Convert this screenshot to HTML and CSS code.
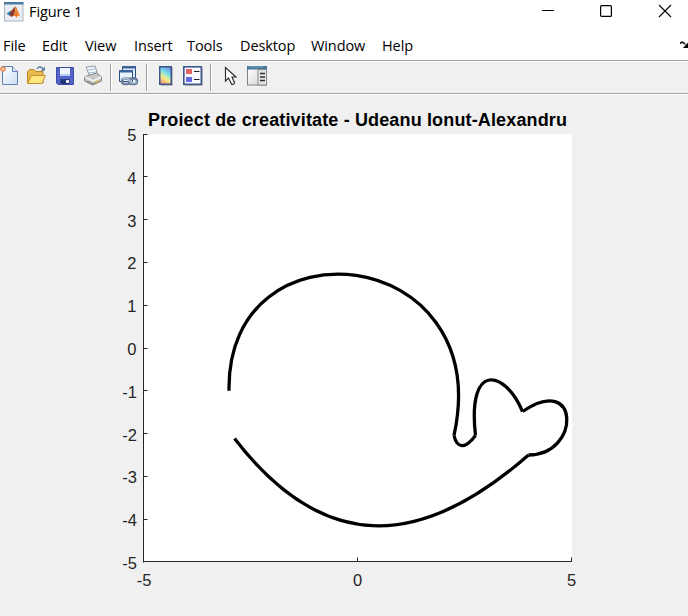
FILE: index.html
```html
<!DOCTYPE html>
<html lang="en">
<head>
<meta charset="utf-8">
<title>Figure 1</title>
<link rel="stylesheet" href="styles.css">
</head>
<body>
<header class="titlebar">
  <svg class="app-icon" width="20" height="20" viewBox="0 0 20 20"><rect x=".5" y=".5" width="18.5" height="18.5" fill="#e9edf1" stroke="#a8b4c0"/><path d="M0 0h19.5v2.5H0z" fill="#487ca5"/><path d="M2.500 11.500 6.500 9l2.200 2.600L6 14z" fill="#247bb0"/><path d="M6.500 9C9 8.500 10 4.500 11.500 4.500l-1 8L7.500 15 6 13.500z" fill="#943a29"/><path d="M11.500 4.500C13 5 14 11 17 15c-2-2-3-2-4.500 1-.7-2-2-2.500-4-1.500 2-2 3-5 3-10z" fill="#ed802c"/></svg>
  <span class="title">Figure 1</span>
  <div class="controls">
    <svg width="16" height="16" viewBox="0 0 16 16"><path d="M2 8.500h12" stroke="#000"/></svg>
    <svg width="16" height="16" viewBox="0 0 16 16"><rect x="2.600" y="3.600" width="10.800" height="10.800" rx="1" fill="none" stroke="#000" stroke-width="1.200"/></svg>
    <svg width="16" height="16" viewBox="0 0 16 16"><path d="m2 3 12 12M14 3 2 15" stroke="#000" stroke-width="1.100"/></svg>
  </div>
</header>
<nav class="menubar">
  <span>File</span><span>Edit</span><span>View</span><span>Insert</span><span>Tools</span><span>Desktop</span><span>Window</span><span>Help</span>
  <svg class="dock" width="8" height="8" viewBox="0 0 8 8"><path d="M0 2.500C2 .5 4 1 5 3.500" fill="none" stroke="#222" stroke-width="1.800"/><path d="M8 1.500v5.500H3z"/></svg>
</nav>
<div class="toolbar">
  <svg width="20" height="22" viewBox="0 0 20 22"><defs><linearGradient id="paper" x2="1" y2="1"><stop stop-color="#fff"/><stop offset="1" stop-color="#c9def7"/></linearGradient></defs><path d="M3.500 1.500h10l5 5v13h-15z" fill="url(#paper)" stroke="#607fb5"/><path d="M13.500 1.500v5h5" fill="#dce9fa" stroke="#607fb5"/><path d="M1 4h6M4 1v6M2 2l4 4M6 2 2 6" stroke="#e8794b" stroke-width="1.300"/><circle cx="4" cy="4" r="1.500" fill="#ffd5ab"/></svg>
  <svg width="20" height="22" viewBox="0 0 20 22"><path d="M1.500 18V6.500l2-2H8l2 2h7V18z" fill="#e9b84e" stroke="#b98624"/><path d="m1.500 18.500 4-8h14l-3.500 8z" fill="#ffe680" stroke="#c4902b"/><path d="M11 4c2-3 4-3 6 0" fill="none" stroke="#53749a" stroke-width="1.300"/><path d="M18.800 1.500v4.300h-4z" fill="#53749a"/></svg>
  <svg width="20" height="22" viewBox="0 0 20 22"><path d="M1.500 2.500h17v17H3l-1.500-1.500z" fill="#5463c9" stroke="#3e4aa5"/><path d="M5 3h10v8H5z" fill="#eff5ff"/><path d="M5 9h10v2H5z" fill="#b6cff5"/><path d="M5.500 14h9v5h-9z" fill="#233477"/><path d="M11 15h3v3h-3z" fill="#e4e9f5"/></svg>
  <svg width="20" height="22" viewBox="0 0 20 22"><path d="m3 2 9-1 3 9-8 2z" fill="#f4f8ff" stroke="#8f9aa8"/><path d="m5 5 7-1M6 8l7-1" stroke="#a4bad4"/><path d="m1.500 12 5-2 7-2 5 4v4l-9 4-8-4z" fill="#c9c9c9" stroke="#858585"/><path d="m2 12 8 4 8-4" fill="none" stroke="#f5f5f5" stroke-width="1.500"/><path d="m4 16 6 3 7-3" fill="none" stroke="#777"/><path d="M12 17.500 16 16" stroke="#dfb55c" stroke-width="1.500"/></svg>
  <i class="sep"></i>
  <svg width="21" height="22" viewBox="0 0 21 22"><path d="M4.500 1.500h13v11h-13z" fill="#dce8f5" stroke="#294c82"/><path d="M4 1h14v2.500H4z" fill="#3d639c"/><path d="M1.500 5.500h13v11h-13z" fill="#e9f1fb" stroke="#294c82"/><path d="M1 5h14v2.500H1z" fill="#3d639c"/><g fill="none"><rect x="4" y="13.500" width="8" height="5.500" rx="2.750" stroke="#6b809c" stroke-width="2.500"/><rect x="11" y="13.500" width="8" height="5.500" rx="2.750" stroke="#6b809c" stroke-width="2.500"/><path d="M4.500 14.500c2-2 5-2 7 1s5 3 7 1" stroke="#b7c9df" stroke-width="1.500"/></g></svg>
  <i class="sep"></i>
  <svg width="14" height="22" viewBox="0 0 14 22"><defs><linearGradient id="spectrum" x1=".7" x2=".3" y2="1"><stop stop-color="#6f8fe2"/><stop offset=".35" stop-color="#79def0"/><stop offset=".65" stop-color="#f2ef87"/><stop offset="1" stop-color="#f49a7c"/></linearGradient></defs><path d="M2 2h12v19H2z" fill="#bbb"/><rect x=".75" y="1.750" width="11.500" height="17.500" fill="url(#spectrum)" stroke="#3d568d" stroke-width="1.500"/></svg>
  <svg width="20" height="22" viewBox="0 0 20 22"><path d="M2 3h18v18H2z" fill="#bbb"/><rect x=".8" y="1.800" width="17.500" height="17.500" fill="#f9fbff" stroke="#3d568d" stroke-width="1.600"/><path d="M3 4h6v5H3z" fill="#e46462"/><path d="M3 12h6v5H3z" fill="#6467df"/><path d="M11 6.500h5.500M11 14.500h5.500" stroke="#222" stroke-width="1.200"/></svg>
  <i class="sep"></i>
  <svg width="13" height="22" viewBox="0 0 13 22"><path d="M1.500 2.500V16l3-3 3 6c1 1 3 0 3-1.500L8 12h4z" fill="#fff" stroke="#303030" stroke-width="1.200"/></svg>
  <svg width="20" height="22" viewBox="0 0 20 22"><defs><linearGradient id="pane" x2="1" y2="1"><stop stop-color="#fff"/><stop offset="1" stop-color="#d2d2d2"/></linearGradient></defs><rect x=".5" y="1.500" width="19" height="18.500" fill="url(#pane)" stroke="#808080"/><path d="M0 1h20v3.500H0z" fill="#447999"/><path d="M2 2h14" stroke="#74a2bd"/><path d="M11 4.500h8.500V20H11z" fill="#e3e3e3" stroke="#888"/><path d="M13 8.500h5M13 12h5M13 15.500h5" stroke="#303030" stroke-width="1.400"/></svg>
</div>
<main class="figure">
  <svg width="688" height="521" viewBox="0 95 688 521">
    <path d="M144 134h428v428H144z" fill="#fff"/>
    <path d="M143.500 134v428.500M143 561.500h429M143.500 134.500h4M143.500 176.500h4M143.500 219.500h4M143.500 262.500h4M143.500 305.500h4M143.500 348.500h4M143.500 390.500h4M143.500 433.500h4M143.500 476.500h4M143.500 519.500h4M357.500 561.500v-4M571.500 561.500v-4" fill="none" stroke="#262626"/>
    <text class="plot-title" x="148" y="126" textLength="419">Proiect de creativitate - Udeanu Ionut-Alexandru</text>
    <g class="ticks y">
      <text x="136.500" y="141">5</text><text x="136.500" y="184">4</text><text x="136.500" y="227">3</text><text x="136.500" y="269">2</text><text x="136.500" y="312">1</text><text x="136.500" y="355">0</text><text x="137" y="398">-1</text><text x="137" y="441">-2</text><text x="137" y="483">-3</text><text x="137" y="526">-4</text><text x="137" y="569">-5</text>
    </g>
    <g class="ticks x"><text x="144" y="586">-5</text><text x="357.500" y="586">0</text><text x="571.500" y="586">5</text></g>
    <g class="whale">
      <path d="M229 390.700C226 216 496 243 454 435.500"/>
      <path d="M454 435.500C457 448.500 465 449.500 475.500 435.500"/>
      <path d="M475.500 435.500C467 361 505 370 522.500 411.500"/>
      <path d="M522.500 411.500C580 372 581 455 528.500 455"/>
      <path d="M234.500 438.500C322 552 418 552 528.500 455"/>
    </g>
  </svg>
</main>
</body>
</html>
```
FILE: styles.css
```css
* { box-sizing: border-box; }
body {
  margin: 0;
  width: 688px;
  height: 616px;
  overflow: hidden;
  background: #f0f0f0;
  color: #000;
  font-family: "Open Sans", "Noto Sans", sans-serif;
  font-size: 14.5px;
}
svg { display: block; flex: none; }
.titlebar {
  display: flex;
  height: 31px;
  padding: 2px 15px 0 4px;
  background: #fff;
}
.title {
  margin: 0 0 0 5px;
  line-height: 20px;
  letter-spacing: -0.1px;
}
.controls { display: flex; gap: 42px; margin-left: auto; }
.controls svg:last-child { margin-left: 1px; }
.menubar {
  display: grid;
  grid-template-columns: 39px 43px 49px 53px 53px 71px 71px 1fr auto;
  height: 29px;
  padding-left: 3px;
  background: #fff;
  line-height: 30px;
  letter-spacing: -0.1px;
}
.dock { margin-top: 10px; }
.toolbar {
  display: flex;
  align-items: flex-start;
  height: 34px;
  padding-top: 4px;
  border-top: 1px solid #a0a0a0;
  border-bottom: 1px solid #a0a0a0;
  box-shadow: inset 0 1px #fff, 0 1px #fff;
}
.toolbar svg:nth-child(1) { margin-left: -1px; }
.toolbar svg:nth-child(2) { margin-left: 7px; }
.toolbar svg:nth-child(3) { margin-left: 9px; }
.toolbar svg:nth-child(4) { margin-left: 8px; }
.toolbar svg:nth-child(6) { margin-left: 7px; }
.toolbar svg:nth-child(8) { margin-left: 12px; }
.toolbar svg:nth-child(9) { margin-left: 10px; }
.toolbar svg:nth-child(11) { margin-left: 13px; }
.toolbar svg:nth-child(12) { margin-left: 10px; }
.sep { width: 1px; height: 27px; margin: -1px 0 0 7px; background: #a0a0a0; box-shadow: 1px 0 #fff; }
.figure { padding-top: 1px; }
.plot-title, .ticks { font-family: "Liberation Sans", Arial, sans-serif; }
.plot-title { font-size: 18px; font-weight: bold; fill: #000; }
.ticks { font-size: 16.5px; fill: #262626; }
.y { text-anchor: end; }
.x { text-anchor: middle; }
.whale { fill: none; stroke: #000; stroke-width: 3.3; }
```
